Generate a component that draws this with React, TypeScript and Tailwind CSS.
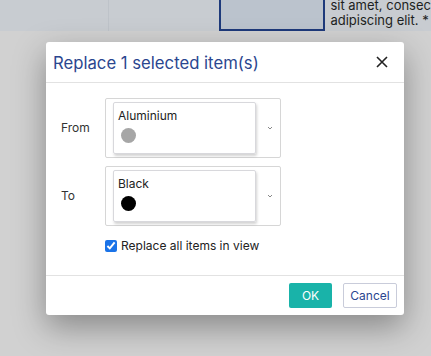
import React from "react";

const ColorSelect = ({ name, swatch }: { name: string; swatch: string }) => (
    <div className="flex items-center w-[176px] h-[60px] border border-[#d6d6d6] rounded-[2px] bg-white">
        <div className="ml-[7px] w-[143px] h-[52px] border border-[#d8d8dc] rounded-[2px] shadow-[1px_2px_3px_rgba(0,0,0,0.18)] px-[4px] pt-[6px]">
            <div className="text-[12px] leading-[14px] text-[#222]">{name}</div>
            <div className="mt-[5px] ml-[3px] w-[15px] h-[15px] rounded-full" style={{ backgroundColor: swatch }} />
        </div>
        <svg width="8" height="6" viewBox="0 0 8 6" className="ml-[10px]">
            <path d="M2 2 L4 4 L6 2" fill="none" stroke="#888" strokeWidth="1" />
        </svg>
    </div>
);

export default function App() {
    return (
        <div className="relative w-[431px] h-[356px] overflow-hidden bg-[#d1d1d1] font-['Inter',sans-serif]">
            {/* dimmed page behind the modal */}
            <div className="flex h-[31px] bg-[#c8ccd1]">
                <div className="w-[113px] border-r border-[#bec3c9]" />
                <div className="w-[113px]" />
                <div className="w-[110px] h-[31px] border-2 border-t-0 border-[#1e3a7b] bg-[#bbc3cd]" />
                <div className="pl-[5px] text-[13px] leading-[15px] text-[#1d1f22] whitespace-nowrap -mt-[2px]">
                    sit amet, consec
                    <br />
                    adipiscing elit. *
                </div>
            </div>

            <div className="absolute left-[46px] top-[42px] w-[358px] bg-white rounded-[3px] shadow-[0_12px_32px_rgba(0,0,0,0.35)]">
                <div className="flex items-center justify-between h-[41px] pl-[7px] pr-[16px] border-b border-[#e2e2e2]">
                    <h2 className="text-[16.7px] text-[#2a468f] pt-[3px]">Replace 1 selected item(s)</h2>
                    <svg width="12" height="12" viewBox="0 0 12 12">
                        <path d="M1 1 L11 11 M11 1 L1 11" stroke="#222" strokeWidth="1.6" />
                    </svg>
                </div>

                <div className="pt-[15px] pb-[22px] px-[15px] border-b border-[#e2e2e2]">
                    <div className="flex items-center">
                        <div className="w-[44px] text-[12px] text-[#333]">From</div>
                        <ColorSelect name="Aluminium" swatch="#a6a6a6" />
                    </div>
                    <div className="flex items-center mt-[8px]">
                        <div className="w-[44px] text-[12px] text-[#333]">To</div>
                        <ColorSelect name="Black" swatch="#000" />
                    </div>
                    <label className="flex items-center gap-[4px] ml-[44px] mt-[13px] text-[12px] leading-[14px] text-[#222]">
                        <input type="checkbox" defaultChecked className="w-[12px] h-[12px] m-0 accent-[#1a73e8]" />
                        Replace all items in view
                    </label>
                </div>

                <div className="flex justify-end gap-[11px] pt-[7px] pb-[7px] pr-[7px]">
                    <button className="w-[43px] h-[25px] rounded-[2px] bg-[#19b3a9] text-white text-[12px]">OK</button>
                    <button className="w-[54px] h-[25px] rounded-[2px] border border-[#c9ccda] bg-white text-[#2a468f] text-[12px]">Cancel</button>
                </div>
            </div>
        </div>
    );
}
